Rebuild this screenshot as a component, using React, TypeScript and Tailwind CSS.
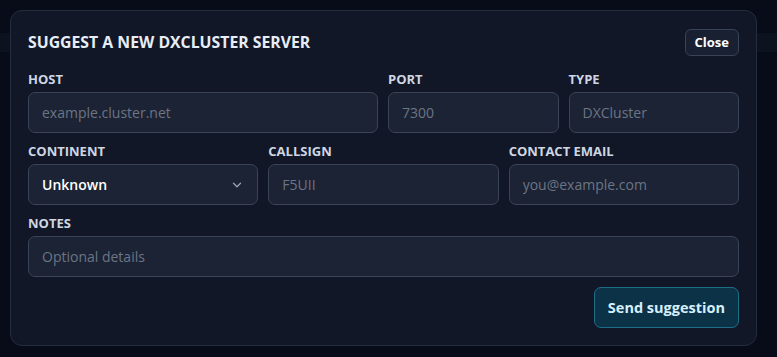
import React from "react";

function Label({ children }: { children: React.ReactNode }) {
  return (
    <div className="text-[13px] leading-[14px] font-bold uppercase text-[#cfd6e2] mb-[6px]">
      {children}
    </div>
  );
}

function Field({ placeholder }: { placeholder: string }) {
  return (
    <input
      readOnly
      placeholder={placeholder}
      className="w-full h-[41px] rounded-[7px] border border-[#3a4457] bg-[#1c2334] px-[13px] text-[14px] text-white placeholder:text-[#6b7585] outline-none"
    />
  );
}

export default function App() {
  return (
    <div
      className="w-[777px] h-[357px] bg-[#080c18] relative overflow-hidden"
      style={{ fontFamily: '"Open Sans", "Noto Sans", sans-serif' }}
    >
      <div className="absolute left-0 right-0 top-[33px] h-[19px] bg-[#0d1220]" />
      <div className="absolute left-[10px] top-[10px] w-[747px] h-[336px] rounded-[12px] border border-[#242c3d] bg-[#111727] px-[17px] pt-[18px] pb-[18px] flex flex-col">
        <div className="flex items-center justify-between h-[27px]">
          <div className="text-[15.8px] font-bold uppercase text-[#e8edf5]">
            Suggest a new DXCluster server
          </div>
          <button className="h-[27px] px-[9px] rounded-[6px] border border-[#394356] bg-[#182032] text-[13px] font-bold text-white">
            Close
          </button>
        </div>
        <div className="mt-[16px] grid grid-cols-[350px_1fr_1fr] gap-x-[10px]">
          <div>
            <Label>Host</Label>
            <Field placeholder="example.cluster.net" />
          </div>
          <div>
            <Label>Port</Label>
            <Field placeholder="7300" />
          </div>
          <div>
            <Label>Type</Label>
            <Field placeholder="DXCluster" />
          </div>
        </div>
        <div className="mt-[11px] grid grid-cols-3 gap-x-[10px]">
          <div>
            <Label>Continent</Label>
            <div className="w-full h-[41px] rounded-[7px] border border-[#3a4457] bg-[#1c2334] px-[13px] flex items-center justify-between">
              <span className="text-[14px] font-semibold text-white">Unknown</span>
              <svg width="14" height="14" viewBox="0 0 24 24" fill="none" stroke="#9aa3b2" strokeWidth="2.2" strokeLinecap="round" strokeLinejoin="round">
                <path d="M6 9l6 6 6-6" />
              </svg>
            </div>
          </div>
          <div>
            <Label>Callsign</Label>
            <Field placeholder="F5UII" />
          </div>
          <div>
            <Label>Contact email</Label>
            <Field placeholder="you@example.com" />
          </div>
        </div>
        <div className="mt-[11px]">
          <Label>Notes</Label>
          <Field placeholder="Optional details" />
        </div>
        <div className="mt-[10px] flex justify-end">
          <button className="h-[41px] px-[13px] rounded-[7px] border border-[#1d6f88] bg-[#0c3248] text-[14.5px] font-bold text-[#d5f0fb]">
            Send suggestion
          </button>
        </div>
      </div>
    </div>
  );
}
